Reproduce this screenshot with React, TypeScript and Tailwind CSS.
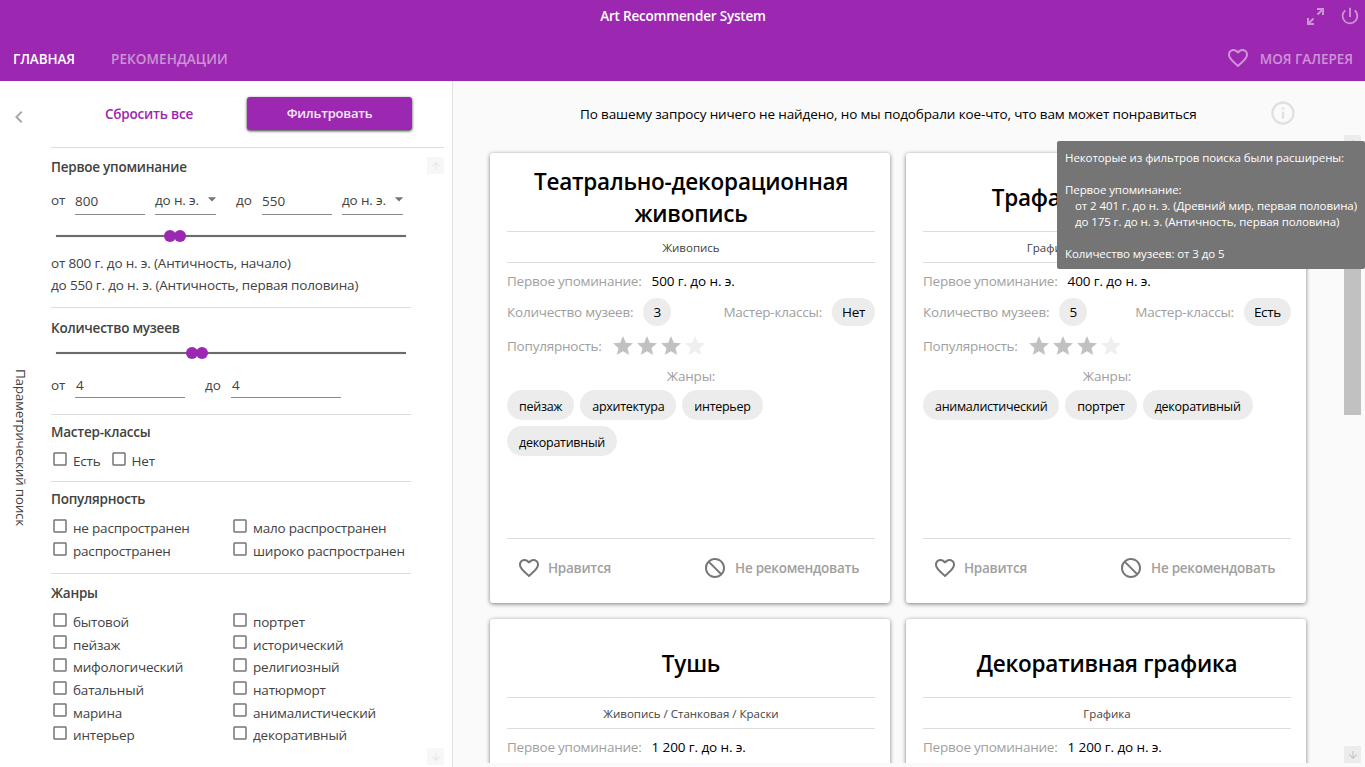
import {
  MdArrowDownward,
  MdArrowDropDown,
  MdArrowUpward,
  MdBlock,
  MdCheckBoxOutlineBlank,
  MdChevronLeft,
  MdFavoriteBorder,
  MdInfoOutline,
  MdPowerSettingsNew,
  MdStar,
} from 'react-icons/md';

type Art = {
  title: string;
  category: string;
  year: string;
  museums: number;
  classes: string;
  stars: number;
  genres: string[];
};

const arts: Art[] = [
  {
    title: 'Театрально-декорационная живопись',
    category: 'Живопись',
    year: '500 г. до н. э.',
    museums: 3,
    classes: 'Нет',
    stars: 3,
    genres: ['пейзаж', 'архитектура', 'интерьер', 'декоративный'],
  },
  {
    title: 'Трафаретная печать',
    category: 'Графика / Печатная графика',
    year: '400 г. до н. э.',
    museums: 5,
    classes: 'Есть',
    stars: 3,
    genres: ['анималистический', 'портрет', 'декоративный'],
  },
  {
    title: 'Тушь',
    category: 'Живопись / Станковая / Краски',
    year: '1 200 г. до н. э.',
    museums: 4,
    classes: 'Есть',
    stars: 3,
    genres: ['пейзаж', 'портрет'],
  },
  {
    title: 'Декоративная графика',
    category: 'Графика',
    year: '1 200 г. до н. э.',
    museums: 4,
    classes: 'Есть',
    stars: 3,
    genres: ['декоративный'],
  },
];

const popularity = ['не распространен', 'мало распространен', 'распространен', 'широко распространен'];

const genres = [
  'бытовой',
  'портрет',
  'пейзаж',
  'исторический',
  'мифологический',
  'религиозный',
  'батальный',
  'натюрморт',
  'марина',
  'анималистический',
  'интерьер',
  'декоративный',
];

function Header() {
  return (
    <header className="flex h-[81px] shrink-0 flex-col bg-[#9c27b0] font-semibold text-white">
      <div className="grid h-8 grid-cols-[1fr_auto_1fr] items-center">
        <span />
        <span className="pl-px tracking-[-0.19px]">Art Recommender System</span>
        <span className="flex items-center justify-end gap-[14px] pr-1 text-white/50">
          <svg width="19" height="19" viewBox="0 0 19 19" fill="currentColor">
            <path d="M11 1h7v7h-2V4.400L12.200 8.200 10.800 6.800 14.600 3H11zM8 18H1v-7h2v3.600L6.800 10.800 8.200 12.200 4.400 16H8z" />
          </svg>
          <MdPowerSettingsNew size={22} />
        </span>
      </div>
      <nav className="flex h-[49px] items-center pt-[5px] pr-3 pl-[13px] text-white/50">
        <span className="w-[98px] tracking-[-0.1px] text-white">ГЛАВНАЯ</span>
        <span className="tracking-[0.1px]">РЕКОМЕНДАЦИИ</span>
        <MdFavoriteBorder size={24} className="-mt-[2px] mr-[10px] ml-auto" />
        <span className="tracking-[-0.02px]">МОЯ ГАЛЕРЕЯ</span>
      </nav>
    </header>
  );
}

function Heading({ children }: { children: string }) {
  return <h2 className="h-6 font-semibold leading-6 tracking-[-0.24px]">{children}</h2>;
}

function Divider() {
  return <div className="h-px w-[360px] shrink-0 bg-[#dcdcdc]" />;
}

function Slider({ low, high }: { low: number; high: number }) {
  return (
    <div className="relative mx-[5px] flex h-3 w-[350px] items-center">
      <div className="h-[2px] w-full bg-[#6b6b6b] shadow-[0_0_1px_#999]" />
      <div className="absolute top-0 size-3 rounded-full bg-[#9c27b0]" style={{ left: low }} />
      <div className="absolute top-0 size-3 rounded-full bg-[#9c27b0]" style={{ left: high }} />
    </div>
  );
}

function EraSelect() {
  return (
    <div className="flex h-[27px] w-[61px] items-center justify-between border-b border-[#8a8a8a] tracking-[-0.15px]">
      <span className="whitespace-nowrap pb-[2px]">до н. э.</span>
      <MdArrowDropDown size={20} className="-mr-[6px] -mt-1 shrink-0 text-[#757575]" />
    </div>
  );
}

function Check({ label }: { label: string }) {
  return (
    <label className="flex items-center gap-1 whitespace-nowrap tracking-[-0.2px]">
      <MdCheckBoxOutlineBlank size={18} className="-mt-[3px] shrink-0 text-[#757575]" />
      <span className="pt-[2px]">{label}</span>
    </label>
  );
}

function ScrollButton({ up }: { up?: boolean }) {
  return (
    <div className="flex size-[17px] items-center justify-center bg-[#ececec] text-[#c1c1c1]">
      {up ? <MdArrowUpward size={12} /> : <MdArrowDownward size={12} />}
    </div>
  );
}

function Sidebar() {
  return (
    <aside className="flex w-[453px] shrink-0 border-r border-[#e0e0e0] bg-white text-[#424242]">
      <div className="flex w-[51px] shrink-0 flex-col items-start">
        <MdChevronLeft size={24} className="mt-6 ml-[7px] text-[#a8a8a8]" />
        <span className="mt-[240px] ml-3 whitespace-nowrap leading-[18px] tracking-[-0.25px] [writing-mode:vertical-rl]">
          Параметрический поиск
        </span>
      </div>
      <div className="flex w-[393px] flex-col">
        <div className="flex h-[66px] shrink-0 pt-4 font-semibold">
          <button className="h-[34px] w-[196px] tracking-[-0.2px] text-[#9c27b0]">Сбросить все</button>
          <button className="h-[33px] w-[165px] rounded-[3px] bg-[#9c27b0] pt-px text-[13px] tracking-[-0.2px] text-white/90 shadow-[0_1px_3px_rgba(0,0,0,0.8)]">
            Фильтровать
          </button>
        </div>
        <div className="h-px shrink-0 bg-[#dcdcdc]" />
        <div className="flex min-h-0 flex-1">
          <div className="flex w-[376px] flex-col">
            <div className="flex h-[159px] shrink-0 flex-col pt-[7px]">
              <Heading>Первое упоминание</Heading>
              <div className="mt-[9px] flex h-[27px] items-center">
                <span className="w-6 pb-[2px]">от</span>
                <span className="mr-[10px] h-[27px] w-[70px] border-b border-[#8a8a8a] leading-[27px]">800</span>
                <EraSelect />
                <span className="ml-5 w-[26px] pb-[2px]">до</span>
                <span className="mr-[10px] h-[27px] w-[70px] border-b border-[#8a8a8a] leading-[27px]">550</span>
                <EraSelect />
              </div>
              <div className="mt-[15px]">
                <Slider low={108} high={118} />
              </div>
              <p className="mt-[10px] leading-[22px] tracking-[-0.17px]">
                от 800 г. до н. э. (Античность, начало)
                <br />
                до 550 г. до н. э. (Античность, первая половина)
              </p>
            </div>
            <Divider />
            <div className="flex h-[106px] shrink-0 flex-col pt-2">
              <Heading>Количество музеев</Heading>
              <div className="mt-[7px]">
                <Slider low={130} high={140} />
              </div>
              <div className="mt-3 flex h-[27px] items-center">
                <span className="w-6 pt-px">от</span>
                <span className="h-[27px] w-[110px] border-b border-[#8a8a8a] pl-px leading-[28px]">4</span>
                <span className="ml-5 w-[26px] pt-px">до</span>
                <span className="h-[27px] w-[110px] border-b border-[#8a8a8a] pl-px leading-[28px]">4</span>
              </div>
            </div>
            <Divider />
            <div className="h-[66px] shrink-0 pt-[5px]">
              <Heading>Мастер-классы</Heading>
              <div className="mt-[5px] flex h-[23px] gap-[9px]">
                <Check label="Есть" />
                <Check label="Нет" />
              </div>
            </div>
            <Divider />
            <div className="h-[91px] shrink-0 pt-[5px]">
              <Heading>Популярность</Heading>
              <div className="mt-[5px] grid auto-rows-[23px] grid-cols-[180px_180px]">
                {popularity.map((p) => (
                  <Check key={p} label={p} />
                ))}
              </div>
            </div>
            <Divider />
            <div className="shrink-0 pt-[7px]">
              <Heading>Жанры</Heading>
              <div className="mt-[5px] grid auto-rows-[22.6px] grid-cols-[180px_180px]">
                {genres.map((g) => (
                  <Check key={g} label={g} />
                ))}
              </div>
            </div>
          </div>
          <div className="flex w-[17px] flex-col justify-between pt-[9px] pb-[2px] opacity-40">
            <ScrollButton up />
            <ScrollButton />
          </div>
        </div>
      </div>
    </aside>
  );
}

function Card({ art }: { art: Art }) {
  return (
    <article className="flex h-[450px] w-[400px] flex-col rounded-[3px] bg-white pt-3 pr-[15px] pl-[17px] shadow-[0_1px_4px_rgba(0,0,0,0.5)]">
      <div className="flex h-[67px] shrink-0 items-center justify-center border-b border-[#dcdcdc] pb-px text-center">
        <h3 className="text-[22.5px] font-semibold leading-8 tracking-[-0.22px]">{art.title}</h3>
      </div>
      <p className="h-[31px] shrink-0 border-b border-[#dcdcdc] text-center text-[11.5px] leading-[31px] text-[#424242]">
        {art.category}
      </p>
      <div className="mt-[6px] flex h-6 shrink-0 items-center gap-[10px]">
        <span className="tracking-[-0.23px] text-[#a0a0a0]">Первое упоминание:</span>
        <span className="tracking-[-0.1px]">{art.year}</span>
      </div>
      <div className="mt-[5px] flex h-7 shrink-0 items-center tracking-[-0.22px]">
        <span className="text-[#a0a0a0]">Количество музеев:</span>
        <span className="ml-[10px] flex size-7 items-center justify-center rounded-full bg-[#ececec]">{art.museums}</span>
        <span className="ml-auto text-[#a0a0a0]">Мастер-классы:</span>
        <span className="ml-[10px] h-7 rounded-full bg-[#ececec] px-[10px] leading-7 tracking-[-0.3px]">{art.classes}</span>
      </div>
      <div className="mt-2 flex h-6 shrink-0 items-center">
        <span className="mr-[9px] tracking-[-0.23px] text-[#a0a0a0]">Популярность:</span>
        {[0, 1, 2, 3].map((i) => (
          <MdStar key={i} size={24} className={i < art.stars ? 'text-[#c1c1c1]' : 'text-[#efefef]'} />
        ))}
      </div>
      <p className="mt-[6px] h-6 shrink-0 text-center leading-6 tracking-[-0.2px] text-[#a0a0a0]">Жанры:</p>
      <div className="mt-[2px] flex flex-wrap gap-[6px] text-[12.5px] tracking-[-0.28px]">
        {art.genres.map((g) => (
          <span key={g} className="h-[30px] rounded-full bg-[#ececec] px-3 pt-px leading-8">
            {g}
          </span>
        ))}
      </div>
      <div className="mt-auto flex h-[65px] shrink-0 items-center border-t border-[#dcdcdc] pr-4 pb-[6px] pl-[10px] font-semibold tracking-[-0.27px] text-[#a0a0a0]">
        <MdFavoriteBorder size={24} className="mr-[7px] text-[#757575]" />
        Нравится
        <MdBlock size={24} className="mr-2 ml-auto -scale-x-100 text-[#757575]" />
        Не рекомендовать
      </div>
    </article>
  );
}

function Results() {
  return (
    <main className="flex min-w-0 flex-1 flex-col bg-[#fafafa] pr-1 pb-1">
      <div className="relative flex h-[54px] shrink-0 items-center pt-3 pl-[127px]">
        <p className="whitespace-nowrap tracking-[-0.13px]">
          По вашему запросу ничего не найдено, но мы подобрали кое-что, что вам может понравиться
        </p>
        <MdInfoOutline size={28} className="mr-[64px] ml-auto -mt-[2px] text-[#e0e0e0]" />
        <div className="absolute top-[60px] -right-1 z-10 h-32 w-[308px] whitespace-pre rounded-[2px] bg-[#757575] px-2 pt-[9px] text-[11.5px] leading-4 tracking-[-0.09px] text-white">
          <p>Некоторые из фильтров поиска были расширены:</p>
          <p className="mt-4">Первое упоминание:</p>
          <p className="pl-[10px]">от 2 401 г. до н. э. (Древний мир, первая половина)</p>
          <p className="pl-[10px]">до 175 г. до н. э. (Античность, первая половина)</p>
          <p className="mt-4">Количество музеев: от 3 до 5</p>
        </div>
      </div>
      <div className="flex min-h-0 flex-1">
        <div className="min-h-0 flex-1 overflow-hidden pt-[18px] pl-[37px]">
          <div className="grid grid-cols-[400px_400px] gap-4">
            {arts.map((a) => (
              <Card key={a.title} art={a} />
            ))}
          </div>
        </div>
        <div className="flex w-[17px] flex-col justify-between">
          <div>
            <ScrollButton up />
            <div className="h-[263px] bg-[#c1c1c1]" />
          </div>
          <ScrollButton />
        </div>
      </div>
    </main>
  );
}

export default function App() {
  return (
    <div className="flex h-[767px] w-[1365px] flex-col overflow-hidden font-['Open_Sans','Noto_Sans',sans-serif] text-[13.5px] text-black">
      <Header />
      <div className="flex min-h-0 flex-1">
        <Sidebar />
        <Results />
      </div>
    </div>
  );
}
